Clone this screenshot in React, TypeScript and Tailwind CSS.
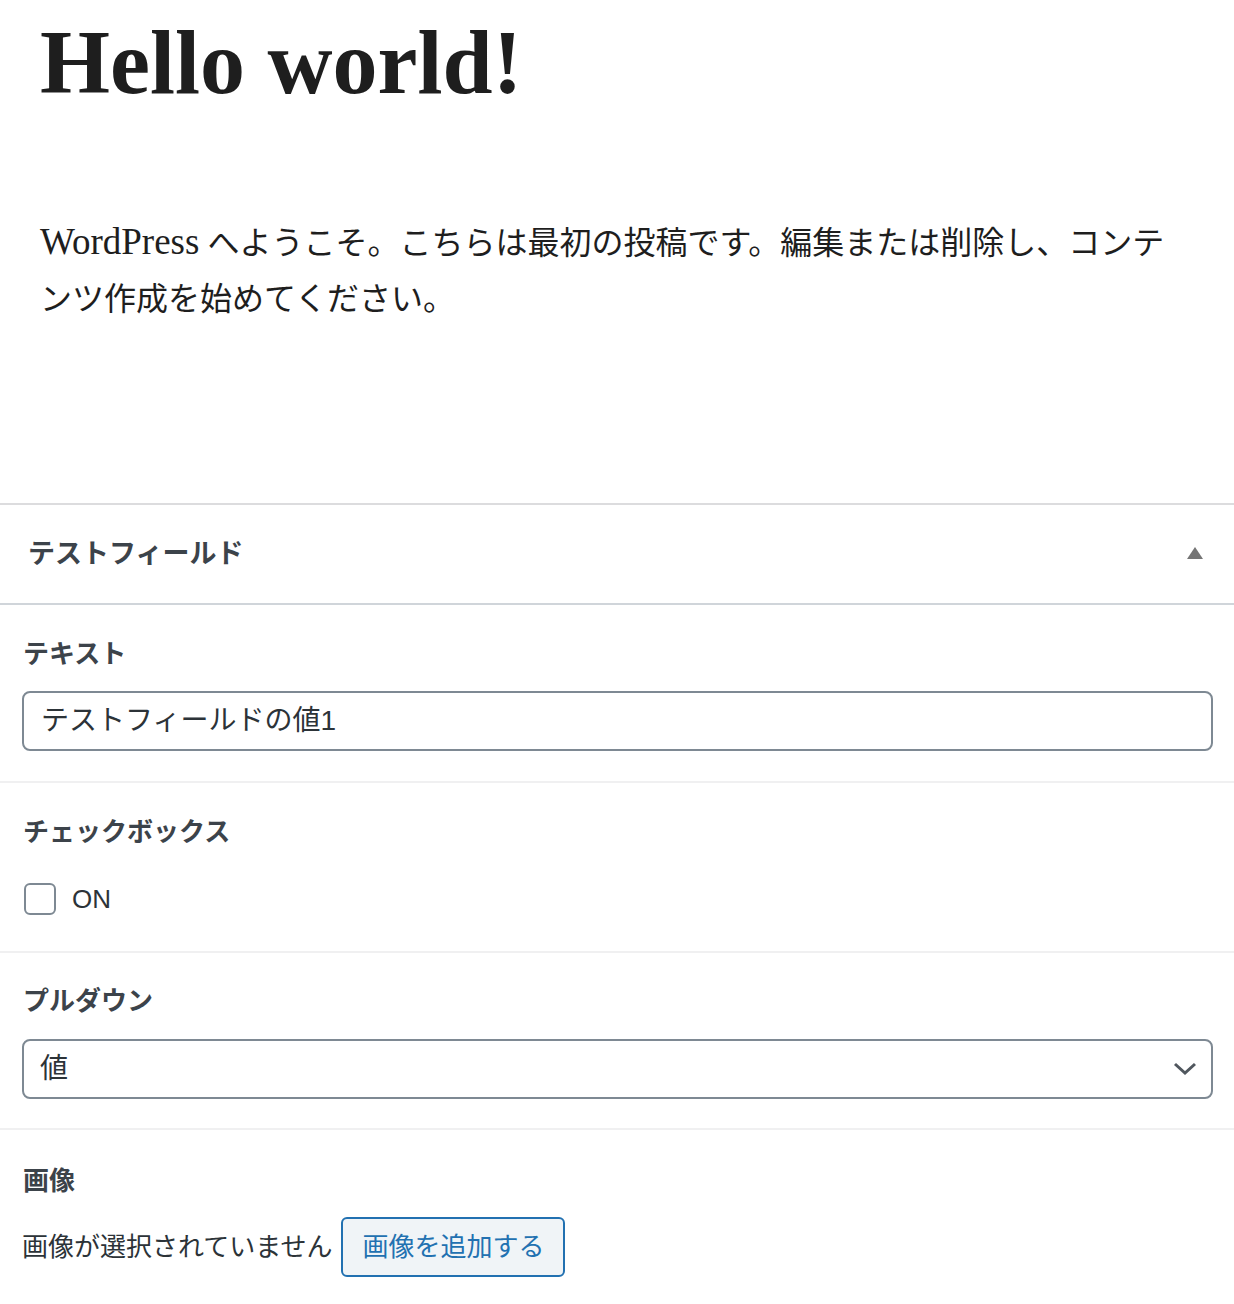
import React from "react";

const sans = "font-['Liberation_Sans','Noto_Sans_CJK_JP',sans-serif]";

function Label({ children }: { children: React.ReactNode }) {
  return (
    <div className={`${sans} text-[26px] leading-[36px] font-bold text-[#3c434a] pl-px`}>
      {children}
    </div>
  );
}

export default function App() {
  return (
    <div className="w-[1234px] bg-white min-h-[1304px]">
      <div className="px-[40px]">
        <h1 className="pt-[13px] text-[90px] leading-[100px] font-bold text-[#1e1e1e] font-['Liberation_Serif','Noto_Sans_CJK_JP',serif]">
          Hello world!
        </h1>
        <p className="mt-[102px] w-[1150px] text-[32px] leading-[56px] text-[#1e1e1e] font-['Liberation_Serif','Noto_Sans_CJK_JP',serif]">
          <span className="text-[37px] leading-[40px]">WordPress</span> へようこそ。こちらは最初の投稿です。編集または削除し、コンテンツ作成を始めてください。
        </p>
      </div>

      <div className="mt-[176px] border-t-2 border-[#dcdcde]">
        <div className="h-[100px] flex items-center justify-between pl-[28px] pr-[31px] border-b-2 border-[#d0d5da]">
          <div className={`${sans} text-[27px] font-bold text-[#3c434a]`}>テストフィールド</div>
          <svg width="16" height="12" viewBox="0 0 16 12" className="-mt-[2px]">
            <path d="M8 0 L16 12 L0 12 Z" fill="#757575" />
          </svg>
        </div>

        <div className="pl-[22px] pr-[21px] pt-[31px] pb-[30px] border-b-2 border-[#f0f0f1]">
          <Label>テキスト</Label>
          <div className={`mt-[19px] h-[60px] rounded-[8px] border-2 border-[#7e8993] flex items-center pl-[17px] ${sans} text-[28px] text-[#2c3338]`}>
            テストフィールドの値1
          </div>
        </div>

        <div className="pl-[22px] pr-[21px] pt-[31px] pb-[30px] border-b-2 border-[#f0f0f1]">
          <Label>チェックボックス</Label>
          <div className="mt-[27px] h-[44px] flex items-center">
            <div className="ml-[2px] w-[32px] h-[32px] rounded-[6px] border-2 border-[#7e8993] bg-white" />
            <span className={`ml-[16px] ${sans} text-[26px] text-[#2c3338]`}>ON</span>
          </div>
        </div>

        <div className="pl-[22px] pr-[21px] pt-[30px] pb-[29px] border-b-2 border-[#f0f0f1]">
          <Label>プルダウン</Label>
          <div className={`mt-[20px] h-[60px] rounded-[8px] border-2 border-[#7e8993] flex items-center justify-between pl-[16px] pr-[14px] ${sans} text-[28px] text-[#2c3338]`}>
            <span>値</span>
            <svg width="24" height="14" viewBox="0 0 24 14">
              <path d="M2 2 L12 11 L22 2" fill="none" stroke="#50575e" strokeWidth="3" />
            </svg>
          </div>
        </div>

        <div className="pl-[22px] pr-[21px] pt-[33px] pb-[26px]">
          <Label>画像</Label>
          <div className="mt-[18px] flex items-center">
            <span className={`${sans} text-[26px] text-[#2c3338]`}>画像が選択されていません</span>
            <button className={`ml-[9px] h-[60px] px-[19px] rounded-[6px] border-2 border-[#2271b1] bg-[#f0f4f7] ${sans} text-[26px] text-[#2271b1]`}>
              画像を追加する
            </button>
          </div>
        </div>
      </div>
    </div>
  );
}
